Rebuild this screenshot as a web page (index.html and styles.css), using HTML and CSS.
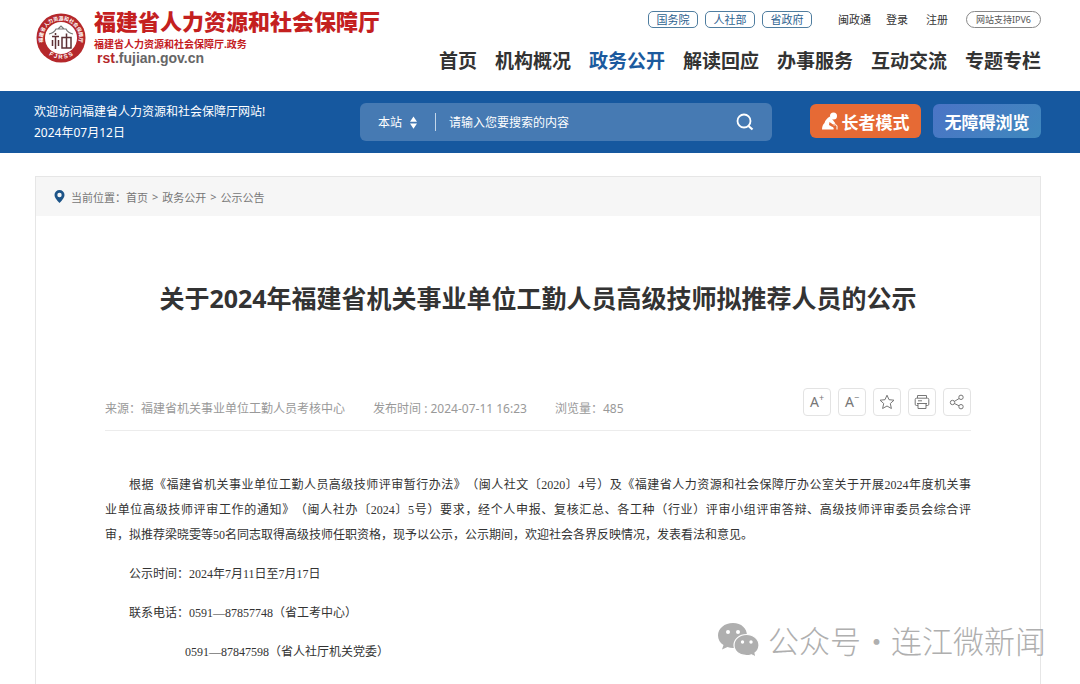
FILE: index.html
```
<!DOCTYPE html>
<html lang="zh-CN">
<head>
    <meta charset="UTF-8">
    <meta name="viewport" content="width=device-width, initial-scale=1.0">
    <title>福建省人力资源和社会保障厅</title>
    <link rel="stylesheet" href="styles.css">
</head>
<body>
    <header class="header">
        <a class="logo" href="#">
            <svg class="seal" viewBox="0 0 50 50" aria-hidden="true">
                <defs>
                    <path id="arcTop" d="M8.5 33 A18.2 18.2 0 1 1 41.5 33"/>
                    <path id="arcBottom" d="M5.5 34 A22 22 0 0 0 44.5 34"/>
                </defs>
                <circle cx="25" cy="25" r="24.5" fill="#b5282b"/>
                <circle cx="25" cy="25" r="16" fill="#fff"/>
                <text class="seal-cn"><textPath href="#arcTop" startOffset="50%">福建省人力资源和社会保障厅</textPath></text>
                <text class="seal-en"><textPath href="#arcBottom" startOffset="50%">F J R S S</textPath></text>
                <path d="M13 21 Q18 20 20 16 H30 Q32 20 37 21 M22 16 L25 13 L28 16" fill="none" stroke="#777" stroke-width="1.2"/>
                <path d="M19.500 20 V22 M16 23.500 H23 M19.500 23.500 V36 M16.500 27 V33 M22.500 27 V33 M26 24.500 H35 V35 H26 Z M30.500 20.500 V35" fill="none" stroke="#5d3236" stroke-width="1.500"/>
            </svg>
            <span class="logo-text">
                <strong class="logo-name">福建省人力资源和社会保障厅</strong>
                <span class="logo-sub">福建省人力资源和社会保障厅.政务</span>
                <span class="logo-url"><em>rst</em>.fujian.gov.cn</span>
            </span>
        </a>
        <div class="header-right">
            <div class="top-links">
                <a class="tag" href="#">国务院</a>
                <a class="tag" href="#">人社部</a>
                <a class="tag" href="#">省政府</a>
                <a class="plain first" href="#">闽政通</a>
                <a class="plain" href="#">登录</a>
                <a class="plain" href="#">注册</a>
                <a class="ipv6" href="#">网站支持IPV6</a>
            </div>
            <nav class="nav">
                <a href="#">首页</a>
                <a href="#">机构概况</a>
                <a class="active" href="#">政务公开</a>
                <a href="#">解读回应</a>
                <a href="#">办事服务</a>
                <a href="#">互动交流</a>
                <a href="#">专题专栏</a>
            </nav>
        </div>
    </header>

    <!-- 搜索栏 -->
    <div class="banner">
        <div class="welcome">
            <div>欢迎访问福建省人力资源和社会保障厅网站!</div>
            <div>2024年07月12日</div>
        </div>
        <form class="search">
            <select class="scope" aria-label="搜索范围">
                <option>本站</option>
            </select>
            <svg class="arrows" viewBox="0 0 8 14" aria-hidden="true">
                <path d="M4 0 L8 6 H0 Z M0 8 H8 L4 14 Z" fill="#fff"/>
            </svg>
            <input class="keyword" type="text" placeholder="请输入您要搜索的内容" aria-label="搜索内容">
            <button class="search-btn" type="button" aria-label="搜索">
                <svg viewBox="0 0 18 18" aria-hidden="true">
                    <circle cx="8" cy="8" r="6.500" fill="none" stroke="#fff" stroke-width="1.800"/>
                    <path d="M12.500 13 L16.500 16.500" stroke="#fff" stroke-width="2.200"/>
                </svg>
            </button>
        </form>
        <div class="modes">
            <button class="mode elder" type="button">
                <svg viewBox="0 0 16 18" aria-hidden="true">
                    <circle cx="11.500" cy="4" r="3.500" fill="#fff"/>
                    <path d="M8 4.500 Q3.500 7 2.500 11 Q0 13 0 17.500 H11.500 Q12.500 15.500 9.500 14.500 L7 13 L7.500 10 L11 12.500 L13.500 11.500 L10.500 7.500 Z" fill="#fff"/>
                    <path d="M11.500 13 Q15 12 15 14 V17.500" fill="none" stroke="#fff" stroke-width="1"/>
                </svg>
                长者模式
            </button>
            <button class="mode access" type="button">无障碍浏览</button>
        </div>
    </div>

    <main class="article">
        <div class="breadcrumb">
            <svg viewBox="0 0 10 13" aria-hidden="true">
                <path d="M5 0 A5 5 0 0 1 10 5 Q10 8 5 13 Q0 8 0 5 A5 5 0 0 1 5 0 Z M5 2.800 A2.200 2.200 0 1 0 5 7.200 A2.200 2.200 0 1 0 5 2.800 Z" fill="#1d5488" fill-rule="evenodd"/>
            </svg>
            <span>当前位置：</span>
            <a href="#">首页</a> &gt; <a href="#">政务公开</a> &gt; <a href="#">公示公告</a>
        </div>
        <div class="article-body">
            <h1>关于2024年福建省机关事业单位工勤人员高级技师拟推荐人员的公示</h1>
            <div class="meta">
                <div class="meta-info">
                    <span>来源：福建省机关事业单位工勤人员考核中心</span>
                    <span>发布时间 : 2024-07-11 16:23</span>
                    <span>浏览量：485</span>
                </div>
                <div class="tools">
                    <button type="button" aria-label="放大字体">A<sup>+</sup></button>
                    <button type="button" aria-label="缩小字体">A<sup>−</sup></button>
                    <button type="button" aria-label="收藏">
                        <svg viewBox="0 0 16 16"><path d="M8 1.200 L10 5.700 L15 6.200 L11.300 9.500 L12.400 14.500 L8 12 L3.600 14.500 L4.700 9.500 L1 6.200 L6 5.700 Z"/></svg>
                    </button>
                    <button type="button" aria-label="打印">
                        <svg viewBox="0 0 16 16"><path d="M3.500 4 V1.500 H12.500 V4 M4 11.500 H2.500 Q1.200 11.500 1.200 10.200 V5.500 Q1.200 4.200 2.500 4.200 H13.500 Q14.800 4.200 14.800 5.500 V10.200 Q14.800 11.500 13.500 11.500 H12 M3 9.500 H13 M4 9.500 V14.500 H12 V9.500 M4 6.800 H8"/></svg>
                    </button>
                    <button type="button" aria-label="分享">
                        <svg viewBox="0 0 16 16"><circle cx="3.500" cy="8.500" r="2.200"/><circle cx="12" cy="3.300" r="2.200"/><circle cx="12" cy="12.700" r="2.200"/><path d="M5.400 7.400 L10.100 4.500 M5.400 9.500 L10.100 11.800"/></svg>
                    </button>
                </div>
            </div>
            <div class="content">
                <p>
                    <span class="line indent">根据《福建省机关事业单位工勤人员高级技师评审暂行办法》（闽人社文〔2020〕4号）及《福建省人力资源和社会保障厅办公室关于开展2024年度机关事</span>
                    <span class="line">业单位高级技师评审工作的通知》（闽人社办〔2024〕5号）要求，经个人申报、复核汇总、各工种（行业）评审小组评审答辩、高级技师评审委员会综合评</span>
                    <span>审，拟推荐梁晓雯等50名同志取得高级技师任职资格，现予以公示，公示期间，欢迎社会各界反映情况，发表看法和意见。</span>
                </p>
                <p class="indent">公示时间：2024年7月11日至7月17日</p>
                <p class="indent">联系电话：0591—87857748（省工考中心）</p>
                <p class="indent second-phone">0591—87847598（省人社厅机关党委）</p>
            </div>
        </div>
    </main>

    <div class="watermark">
        <svg viewBox="0 0 42 36" aria-hidden="true">
            <path d="M15 1 C6.500 1 0 6.500 0 13.500 C0 17.500 2 20.800 5.500 23 L4 27.500 L9.500 25 Q12 26 15 26 C23.500 26 29 20.500 29 13.500 C29 6.500 23.500 1 15 1 Z" fill="#afafaf"/>
            <path d="M28.500 12.500 C35.500 12.500 41 17.200 41 23.200 C41 26.500 39.300 29.200 37 31 L38 35 L33.500 32.800 Q31 33.700 28.500 33.700 C21.500 33.700 16 29 16 23.200 C16 17.200 21.500 12.500 28.500 12.500 Z" fill="#afafaf" stroke="#fff" stroke-width="1.200"/>
            <g fill="#fff">
                <circle cx="10" cy="10" r="2"/><circle cx="20" cy="10" r="2"/>
                <circle cx="24.500" cy="20" r="1.700"/><circle cx="33" cy="20" r="1.700"/>
            </g>
        </svg>
        <span>公众号</span><span class="dot">·</span><span>连江微新闻</span>
    </div>
</body>
</html>
```

FILE: styles.css
```
* {
    box-sizing: border-box;
}
body {
    font-family: "Noto Sans", "Noto Sans CJK SC", sans-serif;
    font-size: 12px;
    color: #333;
    background-color: #fff;
    margin: 0;
    min-height: 100vh;
    display: flex;
    flex-direction: column;
    position: relative;
    text-spacing-trim: space-all;
}
a {
    color: inherit;
    text-decoration: none;
}
button, input, select {
    font-family: inherit;
    border: none;
    padding: 0;
    cursor: pointer;
}

/* 页头 */
.header {
    display: flex;
    justify-content: space-between;
    height: 91px;
    padding: 11px 39px 0 36px;
}
.logo {
    display: flex;
    align-items: flex-start;
    gap: 8px;
}
.seal {
    width: 50px;
    height: 50px;
    margin-top: 2px;
}
.seal-cn {
    font-size: 5px;
    font-weight: bold;
    fill: #fff;
    text-anchor: middle;
}
.seal-en {
    font-family: "Liberation Sans", sans-serif;
    font-size: 6px;
    font-weight: bold;
    fill: #fff;
    text-anchor: middle;
}
.logo-text {
    display: flex;
    flex-direction: column;
    margin-top: -2px;
    color: #c4201f;
    font-weight: bold;
}
.logo-name {
    font-size: 22px;
    font-weight: 900;
    line-height: 25px;
}
.logo-sub {
    margin-top: 3px;
    font-size: 10px;
    line-height: 14px;
}
.logo-url {
    font-family: "Liberation Sans", Arial, sans-serif;
    font-size: 14px;
    line-height: 15px;
    padding-left: 3px;
    color: #666;
}
.logo-url em {
    font-style: normal;
    color: #b5282b;
}
.header-right {
    display: flex;
    flex-direction: column;
    align-items: flex-end;
}
.top-links {
    display: flex;
    align-items: center;
    height: 16px;
    font-size: 11px;
}
.tag {
    width: 50px;
    height: 17px;
    margin-right: 7px;
    border: 1px solid #4f7d9f;
    border-radius: 5px;
    line-height: 15px;
    text-align: center;
    color: #2d6290;
}
.plain {
    margin-right: 18px;
}
.plain.first {
    margin-left: 19px;
    margin-right: 15px;
}
.ipv6 {
    width: 75px;
    height: 17px;
    border: 1px solid #888;
    border-radius: 9px;
    font-size: 9px;
    line-height: 15px;
    text-align: center;
    color: #555;
}
.nav {
    display: flex;
    gap: 18px;
    margin-top: 20px;
    font-size: 19px;
    font-weight: bold;
    line-height: 28px;
}
.nav .active {
    color: #1b5a9e;
}

/* 蓝色横幅 */
.banner {
    display: flex;
    align-items: flex-start;
    height: 62px;
    padding: 12px 39px 0 34px;
    background-color: #16589f;
    color: #fff;
}
.welcome {
    width: 326px;
    line-height: 21px;
    margin-top: -2px;
}
.search {
    flex: 1;
    display: flex;
    align-items: center;
    height: 38px;
    padding: 0 18px;
    border-radius: 6px;
    background-color: #467ab3;
}
.scope {
    appearance: none;
    width: 32px;
    background: none;
    color: #fff;
    font-size: 12px;
}
.scope option {
    color: #333;
}
.arrows {
    width: 7px;
    height: 13px;
    margin-right: 18px;
}
.keyword {
    flex: 1;
    min-width: 0;
    height: 18px;
    padding-left: 13px;
    border-left: 1px solid #c3d6ea;
    background: none;
    color: #fff;
    font-size: 12px;
}
.keyword::placeholder {
    color: #fff;
}
.search-btn {
    width: 18px;
    height: 18px;
    background: none;
}
.search-btn svg {
    display: block;
}
.modes {
    display: flex;
    gap: 12px;
    margin: 1px 0 0 38px;
}
.mode {
    display: flex;
    align-items: center;
    justify-content: center;
    gap: 4px;
    height: 34px;
    border-radius: 6px;
    color: #fff;
    font-size: 17px;
    font-weight: bold;
}
.elder {
    width: 111px;
    background-color: #e66a35;
}
.elder svg {
    width: 16px;
    height: 18px;
}
.access {
    width: 108px;
    background: linear-gradient(135deg, #4b74c6, #3f88bd);
}

/* 正文 */
.article {
    flex: 1;
    margin: 23px 39px 0 35px;
    border: 1px solid #e6e6e6;
    border-bottom: none;
}
.breadcrumb {
    display: flex;
    align-items: center;
    gap: 4px;
    height: 39px;
    padding-left: 18px;
    background-color: #f6f6f6;
    color: #777;
    font-size: 11px;
}
.breadcrumb svg {
    width: 11px;
    height: 13px;
    margin-right: 2px;
}
.breadcrumb span {
    margin-right: -4px;
}
.article-body {
    padding: 0 69px;
}
h1 {
    margin: 62px 0 0;
    font-size: 25px;
    line-height: 40px;
    text-align: center;
    color: #333;
}
.meta {
    display: flex;
    justify-content: space-between;
    align-items: flex-start;
    height: 43px;
    margin-top: 70px;
    border-bottom: 1px solid #ececec;
}
.meta-info {
    display: flex;
    gap: 28px;
    margin-top: 12px;
    line-height: 18px;
    color: #999;
}
.tools {
    display: flex;
    gap: 7px;
}
.tools button {
    width: 28px;
    height: 28px;
    border: 1px solid #e3e3e3;
    border-radius: 4px;
    background-color: #fff;
    color: #777;
    font-size: 14px;
    line-height: 26px;
}
.tools sup {
    font-size: 9px;
    line-height: 0;
}
.tools svg {
    display: block;
    width: 16px;
    height: 16px;
    margin: 0 auto;
    fill: none;
    stroke: #777;
    stroke-width: 1;
}
.content {
    margin-top: 42px;
    font-family: "Liberation Serif", "Noto Sans CJK SC", serif;
    line-height: 25px;
}
.content p {
    margin: 0 0 14px;
}
.content .line {
    display: block;
    text-align-last: justify;
}
.content .indent {
    text-indent: 2em;
}
.content .second-phone {
    padding-left: 56px;
}

/* 右下角水印 */
.watermark {
    position: absolute;
    right: 34px;
    bottom: 23px;
    display: flex;
    align-items: center;
    font-family: "Noto Sans CJK SC", sans-serif;
    font-size: 31px;
    font-weight: 300;
    line-height: 42px;
    color: #afafaf;
}
.watermark svg {
    width: 42px;
    height: 36px;
    margin-right: 8px;
}
.watermark .dot {
    width: 30px;
    text-align: center;
}
```
